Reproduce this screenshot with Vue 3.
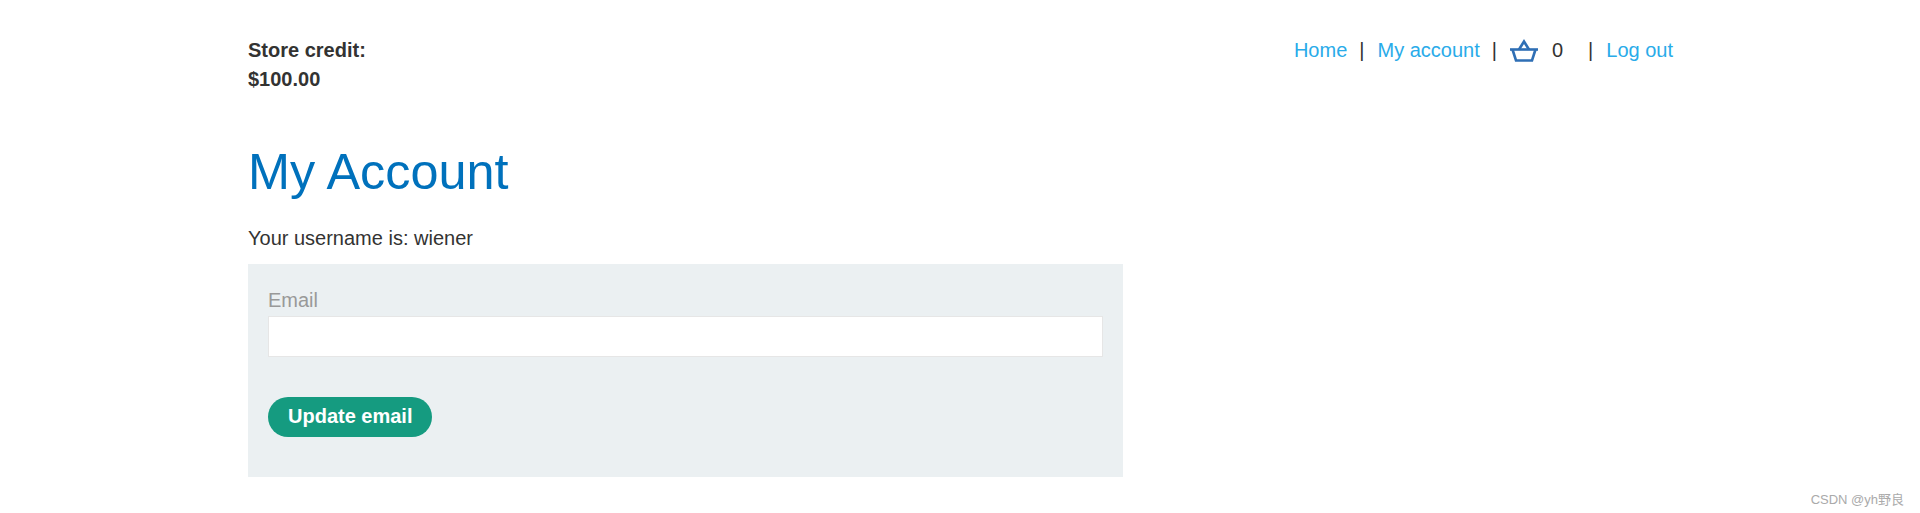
<script setup>
</script>

<template>
  <div class="page">
    <header class="top">
      <div class="credit">
        <div>Store credit:</div>
        <div>$100.00</div>
      </div>
      <nav class="nav">
        <a class="link">Home</a>
        <span class="sep first">|</span>
        <a class="link">My account</a>
        <span class="sep second">|</span>
        <svg class="basket" width="28" height="24" viewBox="0 0 28 24" fill="none" stroke="#2f6fb5" stroke-width="2.6" stroke-linejoin="miter">
          <path d="M0 11.5H28" />
          <path d="M2.5 11.5L6 22.5H22L25.5 11.5" />
          <path d="M9 11.5L14 3.5L19 11.5" />
        </svg>
        <span class="count">0</span>
        <span class="sep third">|</span>
        <a class="link">Log out</a>
      </nav>
    </header>
    <h1 class="title">My Account</h1>
    <p class="user">Your username is: wiener</p>
    <form class="panel">
      <label class="label">Email</label>
      <input class="input" type="text" />
      <button class="btn" type="button">Update email</button>
    </form>
  </div>
  <div class="mark">CSDN @yh野良</div>
</template>

<style>
html, body { margin: 0; background: #fff; }
</style>

<style scoped>
.page {
  width: 1425px;
  margin-left: 248px;
  padding-top: 36px;
  font-family: "Liberation Sans", Arial, sans-serif;
  font-size: 20px;
  color: #333332;
}
.top {
  display: flex;
  justify-content: space-between;
  align-items: flex-start;
}
.credit {
  font-weight: 700;
  line-height: 29px;
}
.nav {
  display: flex;
  align-items: center;
  height: 28px;
}
.link { color: #29abe9; }
.sep { color: #333332; }
.first { margin: 0 13px 0 12px; }
.second { margin: 0 13px 0 12px; }
.third { margin: 0 13px 0 25px; }
.basket { margin: 0 14px 0 0; }
.title {
  margin: 48px 0 0;
  font-size: 50.4px;
  font-weight: 400;
  line-height: 60px;
  color: #0071bc;
}
.user {
  margin: 21px 0 0;
  line-height: 30px;
}
.panel {
  width: 835px;
  height: 173px;
  margin-top: 11px;
  padding: 20px;
  background: #ebf0f2;
  display: flex;
  flex-direction: column;
  align-items: flex-start;
}
.label {
  color: #999;
  line-height: 32px;
}
.input {
  box-sizing: border-box;
  width: 100%;
  height: 41px;
  margin: 0;
  background: #fff;
  border: 1px solid #e6e6e6;
  padding: 0;
}
.btn {
  height: 40px;
  margin-top: 40px;
  padding: 0 20px 2px;
  border: 0;
  border-radius: 20px;
  background: #159b80;
  color: #fff;
  font: 700 20px "Liberation Sans", Arial, sans-serif;
}
.mark {
  position: absolute;
  right: 16px;
  top: 489px;
  font: 13px "Liberation Sans", "Noto Sans CJK SC", sans-serif;
  color: #aaa;
}
</style>
